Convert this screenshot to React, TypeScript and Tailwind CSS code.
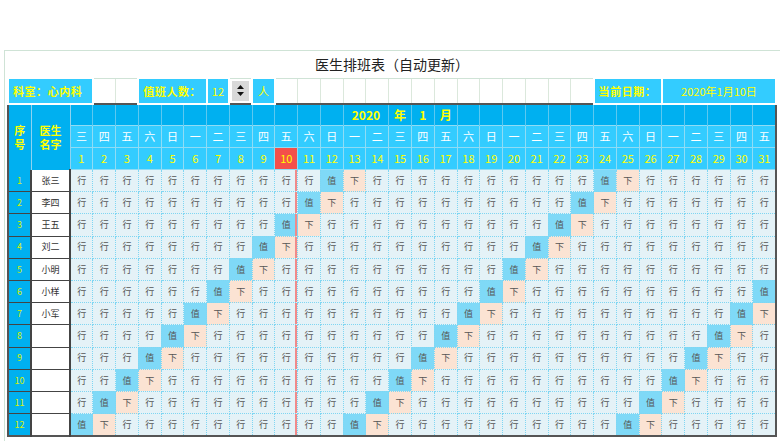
import React from "react";

const wk = ["三","四","五","六","日","一","二"];
const days = Array.from({ length: 31 }, (_, i) => i + 1);
const names = ["张三","李四","王五","刘二","小明","小样","小军","","","","",""];
const DW = "w-[22.77px]";

function cell(r: number, c: number) {
  const m = (c + r) % 12;
  if (m === 1) return "值";
  if (m === 2 && c > 1) return "下";
  return "行";
}

export default function App() {
  const font = { fontFamily: '"Noto Sans CJK SC", "Liberation Sans", sans-serif' };
  return (
    <div className="w-[780px] h-[441px] bg-white relative overflow-hidden" style={font}>
      <div className="absolute left-[4px] top-[50px] w-[776px] h-[391px] border-l border-t border-[#cfe3d6]" />
      <div className="pt-[52px] pl-[7px] relative">
        <table className="table-fixed border-collapse w-[768px]">
          <colgroup>
            <col className="w-[23px]" />
            <col className="w-[39px]" />
            {days.map((d) => <col key={d} className={DW} />)}
          </colgroup>
          <tbody>
            <tr className="h-[26px]">
              <td colSpan={33} className="text-center text-[14px] text-[#222] border-b border-[#cfe3d6]">医生排班表（自动更新）</td>
            </tr>
            <tr className="h-[24px] text-[11px] font-bold text-[#ffff00]">
              <td colSpan={3} className="bg-[#33ccff] border-2 border-white px-1 tracking-wider">科室：心内科</td>
              <td className="border border-[#dbe8dc]" />
              <td className="border border-[#dbe8dc]" />
              <td colSpan={3} className="bg-[#33ccff] border-2 border-white px-1 tracking-wider">值班人数：</td>
              <td className="bg-[#33ccff] border-2 border-white text-center font-normal">12</td>
              <td className="p-[2px]">
                <div className="h-[20px] bg-[#d9d9d9] flex flex-col items-center justify-center gap-[3px]">
                  <svg width="7" height="4" viewBox="0 0 7 4"><path d="M0 4L3.5 0L7 4Z" fill="#111" /></svg>
                  <svg width="7" height="4" viewBox="0 0 7 4"><path d="M0 0L3.5 4L7 0Z" fill="#111" /></svg>
                </div>
              </td>
              <td className="bg-[#33ccff] border-2 border-white text-center font-normal">人</td>
              {Array.from({ length: 14 }).map((_, i) => <td key={i} className="border border-[#dbe8dc]" />)}
              <td colSpan={3} className="bg-[#33ccff] border-2 border-white px-1 tracking-wider">当前日期：</td>
              <td colSpan={5} className="bg-[#33ccff] border-2 border-white text-center font-normal">2020年1月10日</td>
            </tr>
            <tr className="h-[22px] bg-[#00b0f0] text-[#ffff00] text-[12px] font-bold border-t-2 border-x-2 border-[#555]">
              <td rowSpan={3} className="text-center text-[11px] leading-[14px] border-r border-[#8fd3f0]">序<br/>号</td>
              <td rowSpan={3} className="text-center text-[11px] leading-[14px] border-r border-[#8fd3f0]">医生<br/>名字</td>
              {days.map((d) => {
                if (d === 13) return <td key={d} colSpan={2} className="text-center border-r border-[#5cc8f0]">2020</td>;
                if (d === 14) return null;
                const t = d === 15 ? "年" : d === 16 ? "1" : d === 17 ? "月" : "";
                return <td key={d} className="text-center border-r border-[#5cc8f0]">{t}</td>;
              })}
            </tr>
            <tr className="h-[22px] bg-[#33ccff] text-white text-[11px] border-x-2 border-[#555]">
              {days.map((d) => <td key={d} className="text-center border border-[#8fdcf5]">{wk[(d - 1) % 7]}</td>)}
            </tr>
            <tr className="h-[22px] bg-[#33ccff] text-[#ffff00] text-[11px] border-x-2 border-[#555]">
              {days.map((d) => <td key={d} className={`text-center border border-[#8fdcf5] ${d === 10 ? "bg-[#f4504a]" : ""}`}>{d}</td>)}
            </tr>
            {names.map((n, ri) => (
              <tr key={ri} className={`h-[22.2px] text-[9px] border-x-2 border-[#555] ${ri === 11 ? "border-b-2" : ""}`}>
                <td className="bg-[#00b0f0] text-[#d8f000] text-center border-b border-r-2 border-[#444]">{ri + 1}</td>
                <td className="bg-white text-[#333] text-center border-b border-r-2 border-[#444]">{n}</td>
                {days.map((d) => {
                  const v = cell(ri + 1, d);
                  const bg = v === "值" ? "bg-[#7fd9f7]" : v === "下" ? "bg-[#fbe3d3]" : "bg-[#e4f2f7]";
                  return (
                    <td key={d} className={`${bg} text-center text-[#555] border border-dotted border-[#7fd6f2] ${d === 10 ? "shadow-[inset_-2px_0_0_#f08a8a]" : ""}`}>{v}</td>
                  );
                })}
              </tr>
            ))}
          </tbody>
        </table>
      </div>
    </div>
  );
}
